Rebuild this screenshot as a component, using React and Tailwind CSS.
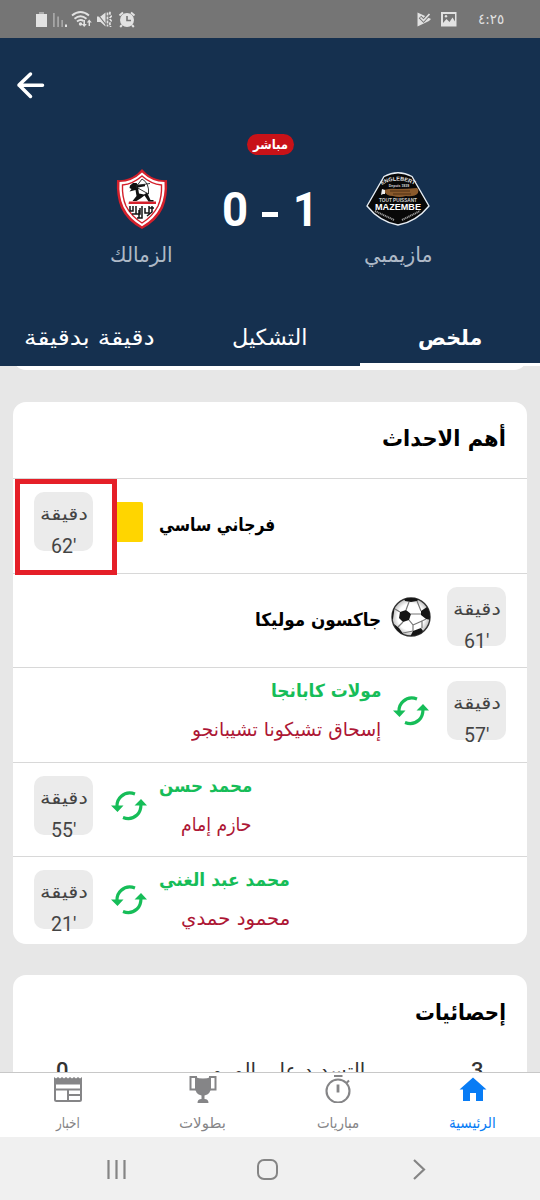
import { useLayoutEffect, useRef, useState } from "react";

// Single line of text, scaled horizontally to fill the width of its box.
function Fit({ children, className = "", dir = "rtl" }) {
  const box = useRef(null);
  const inner = useRef(null);
  const [scale, setScale] = useState(1);
  useLayoutEffect(() => {
    setScale(box.current.clientWidth / inner.current.offsetWidth);
  }, [children]);
  return (
    <div ref={box} dir="ltr" className={`shrink-0 whitespace-nowrap ${className}`}>
      <span ref={inner} dir={dir} className="inline-block origin-left" style={{ transform: `scaleX(${scale})` }}>
        {children}
      </span>
    </div>
  );
}

function StatusBar() {
  return (
    <div className="flex h-[38px] shrink-0 items-center justify-between bg-[#757575] text-[#e2e2e2]">
      <svg width="140" height="38" viewBox="0 0 140 38" fill="currentColor">
        <path d="M36 14h11v13H36z" />
        <path d="M39 12h5v2h-5z" opacity=".5" />
        <g opacity=".45">
          <path d="M53 13h1.800v14H53zM57.200 16.500H59V27h-1.800zM61.300 20H63v7h-1.700z" />
        </g>
        <path d="M65 24.500h2V27h-2z" />
        <g fill="none" stroke="currentColor" strokeWidth="1.900">
          <path d="M72 15.500q8.500-7 17 0M74.500 18.700q6-5 12 0M77 21.500q3.500-2.700 6.500-.5" />
        </g>
        <circle cx="80.500" cy="24" r="1.700" />
        <path d="M85 20v4h1.800L84.200 27l-2.600-3h1.800v-4zM90 26v-3.500h1.800L89.200 19.500l-2.400 3h1.800V26z" />
        <path d="M97 16.500h3.500l5-4V26.500l-5-4.500H97z" />
        <path d="M96 12l11 14" stroke="#757575" strokeWidth="1.200" />
        <path d="M107.500 12.500v14M110.500 12q-1.500 1.300 0 2.600t0 2.600 0 2.600 0 2.600 0 2.600v2" fill="none" stroke="currentColor" strokeWidth="1.700" strokeDasharray="3 1" />
        <path d="M119.500 15.500l3.500-3M134.500 15.500l-3.500-3M122 25l-1.800 2M132 25l1.800 2" stroke="currentColor" strokeWidth="2" />
        <circle cx="127" cy="20" r="7" />
        <path d="M127 16v4.500h4" fill="none" stroke="#757575" strokeWidth="1.600" />
      </svg>
      <div className="flex items-center pr-[36px]">
        <svg width="42" height="18" viewBox="0 0 42 18" fill="currentColor">
          <path d="M0.500 2.500L7 5.500L13 8.500L14 9L12 11L0.500 16.500z" />
          <path d="M3 7l3.500 3.500L13 3.500" fill="none" stroke="#757575" strokeWidth="3.600" />
          <path d="M3.500 7.500l3 3L12.500 4" fill="none" stroke="currentColor" strokeWidth="1.700" />
          <path fillRule="evenodd" d="M24 2h15.500v14.500H24zM26 4v9l3.500-4 3 3 3-4.500 2.500 4V4z" />
          <circle cx="29" cy="6.300" r="1.200" />
        </svg>
        <Fit dir="ltr" className="ml-[19px] w-[26px] font-['DejaVu_Sans',sans-serif] text-[14px] leading-[38px]">٤:٢٥</Fit>
      </div>
    </div>
  );
}

function ZamalekLogo() {
  return (
    <svg width="52" height="62" viewBox="0 0 52 62">
      <path d="M26 1L31 6Q40 13 51 12Q52 28 47 40Q41 53 26 61Q11 53 5 40Q0 28 1 12Q12 13 21 6Z" fill="#d4202b" />
      <path d="M26 4.500Q36 14 48.500 14Q49.500 28 44.500 39Q39 50.500 26 58.300Q13 50.500 7.500 39Q2.500 28 3.500 14Q16 14 26 4.500Z" fill="#fff" />
      <path d="M26 8Q35 16 45.500 17Q46 29 42 38Q37 48 26 55Q15 48 10 38Q6 29 6.500 17Q17 16 26 8Z" fill="#fff" stroke="#d4202b" strokeWidth="1.400" />
      <path d="M13 33.500h27v2.500H12.500z" fill="#d4202b" />
      <path d="M14 17.500l3-2.500 3.500 0 1.500 2 7-.8v2l-7 1.300 1 6 5 1 3-2 3.500 7.500h3v1.500h-5l-4-6-4 3-4 2.500h-4l4-5-1-6-6 1.500 2-2.500-2-1z" fill="#111" />
      <path d="M26 11q7.500 4 6.500 15M26 11l-6 8 12.500 7M20 17.500l14-2" fill="none" stroke="#222" strokeWidth=".9" />
      <path d="M14 38v5h3v-5M20 38v8h4v-6M26 38v12h-5M29 40v5h4v-7M36 38v6l-5 4M16 46h4M23 42v8M33 40h5" fill="none" stroke="#151515" strokeWidth="1.500" />
    </svg>
  );
}

function MazembeLogo() {
  return (
    <svg width="64" height="54" viewBox="0 0 64 54" fontFamily="Liberation Sans, sans-serif" fontWeight="700" textAnchor="middle">
      <path d="M18 4.500Q32-3 46 4.500L63 34Q50 50 32 53Q14 50 1 34Z" fill="#080808" stroke="#e6edf4" strokeWidth="1.400" strokeLinejoin="round" />
      <path id="crestArc" d="M14 14Q32 3 50 14" fill="none" />
      <text fontSize="5.500" fill="#e8e8e8"><textPath href="#crestArc" startOffset="50%">ENGLEBERT</textPath></text>
      <text x="33" y="15" fontSize="3.500" fill="#ddd">Depuis 1939</text>
      <path d="M18 18q7-2 13-1 10 0 20-1 2 1 1 5-3 4-12 3-7 2-13 0-7 0-9-5z" fill="#8a5a2c" />
      <path d="M16 17l3 1v4h-2l-2 1z" fill="#eee" />
      <path d="M24 19h20M27 22h18" stroke="#4d2e12" />
      <text x="32" y="30" fontSize="6" fill="#ccc" textLength="38" lengthAdjust="spacingAndGlyphs">TOUT PUISSANT</text>
      <text x="32" y="37.500" fontSize="8.500" fill="#fff" textLength="46" lengthAdjust="spacingAndGlyphs">MAZEMBE</text>
      <path d="M9 39l19 9M36 48l18-9" stroke="#999" strokeWidth="2" strokeDasharray="1.200 .6" />
    </svg>
  );
}

function Header() {
  return (
    <header className="flex h-[328px] shrink-0 flex-col bg-[#15304f] text-white">
      <svg className="ml-[16px] mt-[33px] shrink-0" width="30" height="28" viewBox="0 0 30 28" fill="none" stroke="#fff" strokeWidth="3.500" strokeLinecap="round" strokeLinejoin="round">
        <path d="M14.500 3L3 14L14.500 25.500M3 14.200H26.500" />
      </svg>
      <div className="mt-[35px] flex h-[21px] w-[47px] shrink-0 items-center justify-center self-center rounded-full bg-[#c81218]">
        <Fit className="w-[35px] text-[13px] font-bold leading-[21px]">مباشر</Fit>
      </div>
      <div className="flex h-[120px] shrink-0">
        <div className="flex w-[196px] flex-col items-center pl-[87px] pt-[13px]">
          <ZamalekLogo />
          <Fit className="mt-[9px] w-[63px] text-[21px] leading-[32px] text-[#aeb9c7]">الزمالك</Fit>
        </div>
        <div className="flex flex-1 pl-[26px] pt-[26px] font-[Roboto,sans-serif] text-[49px] font-bold leading-[57px]">
          <Fit dir="ltr" className="w-[26px]">0</Fit>
          <div className="ml-[14px] mt-[31px] h-[5px] w-[16px] bg-white" />
          <Fit dir="ltr" className="ml-[15px] w-[25px]">1</Fit>
        </div>
        <div className="flex w-[196px] flex-col items-center pr-[88px] pt-[17px]">
          <MazembeLogo />
          <Fit className="mt-[13px] w-[69px] text-[21px] leading-[32px] text-[#aeb9c7]">مازيمبي</Fit>
        </div>
      </div>
      <nav className="mt-auto grid h-[56px] grid-cols-3">
        <div className="flex h-[56px] justify-center pr-[2px]">
          <Fit className="w-[131px] text-[22px] leading-[56px]">دقيقة بدقيقة</Fit>
        </div>
        <div className="flex h-[56px] justify-center">
          <Fit className="w-[76px] text-[22px] leading-[56px]">التشكيل</Fit>
        </div>
        <div className="flex h-[56px] justify-center border-b-[3px] border-white">
          <Fit className="w-[64px] text-[21px] font-bold leading-[56px]">ملخص</Fit>
        </div>
      </nav>
    </header>
  );
}

function Minute({ value }) {
  return (
    <div className="mt-[13px] flex h-[59px] w-[59px] shrink-0 flex-col items-center rounded-[10px] bg-[#ebebeb] text-[#444]">
      <Fit className="mt-[6px] w-[48px] text-[18px] leading-[32px]">دقيقة</Fit>
      <Fit dir="ltr" className="w-[25px] font-[Roboto,sans-serif] text-[19.500px] leading-[33px]">{value}'</Fit>
    </div>
  );
}

function Swap() {
  return (
    <svg width="38" height="32" viewBox="0 0 38 32" className="shrink-0">
      <g fill="none" stroke="#16bd58" strokeWidth="3.200">
        <path d="M25 4Q17 1 11 6.500Q7 10 7 16M13 27.500Q21 30.500 27 25Q31 21.500 31 14" />
      </g>
      <path d="M1 15.500H13.500L7.500 22zM24.500 15.500L31 9L37 15.500z" fill="#16bd58" />
    </svg>
  );
}

function Ball() {
  return (
    <svg width="40" height="40" viewBox="0 0 40 40" className="shrink-0">
      <defs>
        <clipPath id="ballEdge"><circle cx="20" cy="20" r="19" /></clipPath>
        <radialGradient id="ballShade">
          <stop offset=".7" stopColor="#fff" />
          <stop offset="1" stopColor="#bbb" />
        </radialGradient>
      </defs>
      <circle cx="20" cy="20" r="19" fill="url(#ballShade)" stroke="#333" strokeWidth="1.400" />
      <g clipPath="url(#ballEdge)" fill="#151515">
        <path d="M9 15L15 13L20 17L18 23L12 25L8 21zM30 14L36 10L40 15V23L35 22L30 18zM12 0H30L26 4L20 5L14 4zM22 34L30 31L32 34L28 40H19zM0 12L4 7L3 15L2 22H0zM3 27L8 31L13 38L6 35z" />
        <path d="M15 13L18 5M20 17H30M18 23L22 28V34M22 28L31 24M12 25L7 30M9 15L4 12M30 14L26 4M35 22L31 24V31M22 34L12 36" fill="none" stroke="#777" strokeWidth="1.200" />
      </g>
    </svg>
  );
}

function RightRow({ minute, icon, children }) {
  return (
    <div dir="rtl" className="flex h-[94.500px] shrink-0 border-t-[1.500px] border-[#d8d8d8] pr-[21px]">
      <Minute value={minute} />
      <div className="flex w-[66px] justify-center pr-[6px] pt-[13px]">{icon}</div>
      <div className="flex flex-col items-start">{children}</div>
    </div>
  );
}

function LeftRow({ minute, icon, children }) {
  return (
    <div dir="ltr" className="flex h-[94.500px] shrink-0 border-t-[1.500px] border-[#d8d8d8] pl-[21px]">
      <Minute value={minute} />
      <div className="flex w-[66px] pl-[17px] pt-[13px]">{icon}</div>
      <div className="flex flex-col items-end">{children}</div>
    </div>
  );
}

const inName = "text-[18px] font-bold leading-[32px] text-[#16bd58] mt-[7px]";
const outName = "text-[19px] leading-[32px] text-[#ad1634] mt-[6px]";
const single = "text-[18px] font-bold leading-[32px] text-black mt-[30px]";

function Events() {
  return (
    <section className="relative mx-[13px] mt-[32px] h-[542px] shrink-0 rounded-[13px] bg-white">
      <div className="flex h-[76px] justify-end pr-[21px] pt-[19px]">
        <Fit className="w-[124px] text-[22px] font-bold leading-[36px] text-black">أهم الاحداث</Fit>
      </div>
      <LeftRow minute="62" icon={<div className="ml-[7px] mt-[10px] h-[40px] w-[26px] rounded-r-[2px] bg-[#ffd500]" />}>
        <Fit className={`w-[116px] ${single}`}>فرجاني ساسي</Fit>
      </LeftRow>
      <RightRow minute="61" icon={<div className="mt-[10px]"><Ball /></div>}>
        <Fit className={`w-[126px] ${single}`}>جاكسون موليكا</Fit>
      </RightRow>
      <RightRow minute="57" icon={<div className="mt-[14px]"><Swap /></div>}>
        <Fit className={`w-[110px] ${inName}`}>مولات كابانجا</Fit>
        <Fit className={`w-[189px] ${outName}`}>إسحاق تشيكونا تشيبانجو</Fit>
      </RightRow>
      <LeftRow minute="55" icon={<div className="mt-[14px]"><Swap /></div>}>
        <Fit className={`w-[93px] ${inName}`}>محمد حسن</Fit>
        <Fit className={`w-[71px] ${outName}`}>حازم إمام</Fit>
      </LeftRow>
      <LeftRow minute="21" icon={<div className="mt-[14px]"><Swap /></div>}>
        <Fit className={`w-[131px] ${inName}`}>محمد عبد الغني</Fit>
        <Fit className={`w-[109px] ${outName}`}>محمود حمدي</Fit>
      </LeftRow>
      <div className="absolute left-[2px] top-[77px] h-[96px] w-[102px] border-[5px] border-[#e51f28]" />
    </section>
  );
}

function Stats() {
  return (
    <section className="mx-[13px] mt-[31px] h-[200px] shrink-0 rounded-t-[13px] bg-white">
      <div className="flex h-[74px] justify-end pr-[21px] pt-[20px]">
        <Fit className="w-[91px] text-[22px] font-bold leading-[36px] text-black">إحصائيات</Fit>
      </div>
      <div className="flex items-start pl-[43px] text-[#333]">
        <Fit dir="ltr" className="mt-[7px] w-[13px] font-[Roboto,sans-serif] text-[22px] font-medium leading-[30px]">0</Fit>
        <Fit className="ml-[126px] mt-[7px] w-[170px] text-[21px] leading-[30px]">التسديد على المرمى</Fit>
        <Fit dir="ltr" className="ml-[106px] mt-[7px] w-[13px] font-[Roboto,sans-serif] text-[22px] font-medium leading-[30px]">3</Fit>
      </div>
    </section>
  );
}

const NewsIcon = () => (
  <svg width="30" height="30" viewBox="0 0 30 30" fill="none" stroke="#858587" strokeWidth="2">
    <path d="M2 6V26.500Q2 28 3.500 28H26.500Q28 28 28 26.500V6M2 10.500H28M2 16.500H28M15 16.500V28M15 22H28" />
    <path d="M1 4l2 1.500L5 4l2 1.500L9 4l2 1.500L13 4l2 1.500L17 4l2 1.500L21 4l2 1.500L25 4l2 1.500L29 4V11H1z" fill="#858587" stroke="none" />
  </svg>
);

const TrophyIcon = () => (
  <svg width="30" height="30" viewBox="0 0 30 30" fill="#858587">
    <path d="M7 4q8 3 16 0v10q0 7-6.500 8.500V26q4 0 4 4h-11q0-4 4-4v-3.500Q7 21 7 14z" />
    <path d="M8 4H2.500V16.500H8zM22 4H27.500V16.500H22z" fill="none" stroke="#858587" strokeWidth="2" />
  </svg>
);

const WatchIcon = () => (
  <svg width="30" height="30" viewBox="0 0 30 30" fill="none" stroke="#858587" strokeWidth="2.100">
    <circle cx="15" cy="18" r="11.500" />
    <path d="M11 3H19.500M23.500 10L26 7.500" />
    <path d="M15 11.500V19.500" strokeWidth="2.800" />
  </svg>
);

const HomeIcon = () => (
  <svg width="30" height="30" viewBox="0 0 30 30" fill="#087cf5">
    <path d="M15 4.500L28.500 16.500H25V28H18V20H12V28H5V16.500H1.500z" />
  </svg>
);

function BottomNav() {
  const label = "mt-[6px] text-[15px] leading-[28px]";
  return (
    <nav className="grid h-[65px] shrink-0 grid-cols-4 border-t border-[#c8c8c8] bg-white text-[#858587]">
      <div className="flex flex-col items-center"><NewsIcon /><Fit className={`w-[24px] ${label}`}>اخبار</Fit></div>
      <div className="flex flex-col items-center"><TrophyIcon /><Fit className={`w-[47px] ${label}`}>بطولات</Fit></div>
      <div className="flex flex-col items-center"><WatchIcon /><Fit className={`w-[42px] ${label}`}>مباريات</Fit></div>
      <div className="flex flex-col items-center text-[#087cf5]"><HomeIcon /><Fit className={`w-[47px] ${label}`}>الرئيسية</Fit></div>
    </nav>
  );
}

function SystemNav() {
  return (
    <div className="flex h-[63px] shrink-0 items-center bg-[#f0f0f0] pl-[105px]">
      <svg width="24" height="24" viewBox="0 0 24 24" stroke="#858585" strokeWidth="2.200">
        <path d="M3.500 3V22M11.500 3V22M19.500 3V22" />
      </svg>
      <div className="ml-[128px] mt-[2px] h-[21px] w-[21px] rounded-[7px] border-2 border-[#858585]" />
      <svg className="ml-[133px]" width="16" height="24" viewBox="0 0 16 24" fill="none" stroke="#858585" strokeWidth="2.200">
        <path d="M3 3L13 12.500L3 22" />
      </svg>
    </div>
  );
}

export default function App() {
  return (
    <div className="flex h-[1200px] w-[540px] flex-col overflow-hidden bg-[#e7e7e7] font-['DejaVu_Sans',sans-serif]">
      <StatusBar />
      <Header />
      <main className="flex min-h-0 flex-1 flex-col overflow-hidden">
        <div className="mx-[13px] -mt-[26px] h-[30px] shrink-0 rounded-b-[13px] bg-white" />
        <Events />
        <Stats />
      </main>
      <BottomNav />
      <SystemNav />
    </div>
  );
}
